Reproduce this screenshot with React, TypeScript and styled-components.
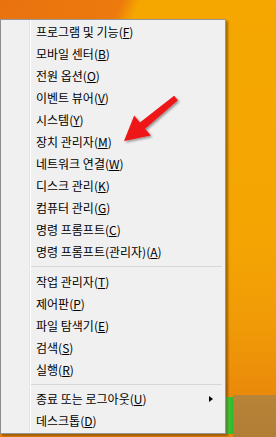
import React from "react";
import styled, { createGlobalStyle } from "styled-components";

const Global = createGlobalStyle`
  html, body { margin: 0; padding: 0; }
  body { width: 276px; height: 437px; overflow: hidden; }
`;

const Page = styled.div`
  position: relative;
  width: 276px;
  height: 437px;
  overflow: hidden;
  display: flex;
  align-items: flex-start;
  padding-top: 19px;
  box-sizing: border-box;
  background:
    linear-gradient(112deg, #e9720f 0, #ec7a0d 27%, rgba(243, 160, 10, 0) 31%),
    linear-gradient(180deg, #f5a700 0%, #f4a503 55%, #f09a07 75%, #ea8a0b 90%, #e8860c 100%);
  font-family: "Noto Sans CJK KR", "Noto Sans", sans-serif;
`;

const Menu = styled.div`
  position: relative;
  z-index: 1;
  width: 226px;
  box-sizing: border-box;
  background: #f0f0f0;
  border: 1px solid #979797;
  border-left-color: #8c8c8c;
  box-shadow: 2px 2px 2px rgba(60, 30, 0, 0.45);
  padding: 1px 0 1px 0;
  display: flex;
  flex-direction: column;
  background-image: linear-gradient(
    90deg,
    #f0f0f0 0,
    #f0f0f0 28px,
    #e2e3e3 28px,
    #e2e3e3 29px,
    #ffffff 29px,
    #ffffff 30px,
    #f0f0f0 30px
  );
`;

const Item = styled.div`
  position: relative;
  height: 22px;
  line-height: 22px;
  padding-left: 35px;
  font-size: 12px;
  color: #000;
  white-space: nowrap;
  u {
    text-decoration: underline;
    text-underline-offset: 1px;
  }
`;

const SubArrow = styled.span`
  position: absolute;
  right: 12px;
  top: 8px;
  width: 0;
  height: 0;
  border-top: 3.5px solid transparent;
  border-bottom: 3.5px solid transparent;
  border-left: 4px solid #000;
`;

const Separator = styled.div<{ $below: number }>`
  height: 1px;
  background: #d7d7d7;
  margin: 3px 3px ${(p) => p.$below}px 30px;
`;

const Side = styled.div`
  flex: 1;
  align-self: stretch;
  display: flex;
  flex-direction: column;
  justify-content: flex-end;
  margin-top: -19px;
`;

const TileRow = styled.div`
  height: 42px;
  display: flex;
`;

const GreenTile = styled.div`
  width: 7px;
  margin: 2px 0 3px 0;
  background: linear-gradient(90deg, #5fe05a 0, #3ccc35 40%, #2fb52a 100%);
`;

const BrownTile = styled.div`
  flex: 1;
  background: linear-gradient(180deg, #b88438 0, #b27d36 100%);
`;

const Overlay = styled.svg`
  position: absolute;
  left: 0;
  top: 0;
  z-index: 2;
  pointer-events: none;
`;

type Entry = { label: string; key: string; tail?: string; sub?: boolean } | "sep";

const entries: Entry[] = [
  { label: "프로그램 및 기능", key: "F" },
  { label: "모바일 센터", key: "B" },
  { label: "전원 옵션", key: "O" },
  { label: "이벤트 뷰어", key: "V" },
  { label: "시스템", key: "Y" },
  { label: "장치 관리자", key: "M" },
  { label: "네트워크 연결", key: "W" },
  { label: "디스크 관리", key: "K" },
  { label: "컴퓨터 관리", key: "G" },
  { label: "명령 프롬프트", key: "C" },
  { label: "명령 프롬프트(관리자)", key: "A" },
  "sep",
  { label: "작업 관리자", key: "T" },
  { label: "제어판", key: "P" },
  { label: "파일 탐색기", key: "E" },
  { label: "검색", key: "S" },
  { label: "실행", key: "R" },
  "sep",
  { label: "종료 또는 로그아웃", key: "U", sub: true },
  { label: "데스크톱", key: "D" },
];

export default function App() {
  let sepCount = 0;
  return (
    <>
      <Global />
      <Page>
        <Menu>
          {entries.map((e, i) => {
            if (e === "sep") {
              sepCount += 1;
              return <Separator key={i} $below={sepCount === 1 ? 4 : 3} />;
            }
            return (
              <Item key={i}>
                {e.label}(<u>{e.key}</u>)
                {e.sub && <SubArrow />}
              </Item>
            );
          })}
        </Menu>
        <Side>
          <TileRow>
            <GreenTile />
            <BrownTile />
          </TileRow>
        </Side>
        <Overlay width="276" height="437" viewBox="0 0 276 437">
          <defs>
            <filter id="sh" x="-20%" y="-20%" width="140%" height="140%">
              <feDropShadow dx="1.5" dy="1.5" stdDeviation="1.2" floodColor="#000" floodOpacity="0.4" />
            </filter>
          </defs>
          <polygon
            filter="url(#sh)"
            fill="#ee1418"
            points="174.1,95.7 139.9,122.5 134.2,115.6 124,141 150.8,135.6 145.1,128.7 177.9,100.3"
          />
        </Overlay>
      </Page>
    </>
  );
}
